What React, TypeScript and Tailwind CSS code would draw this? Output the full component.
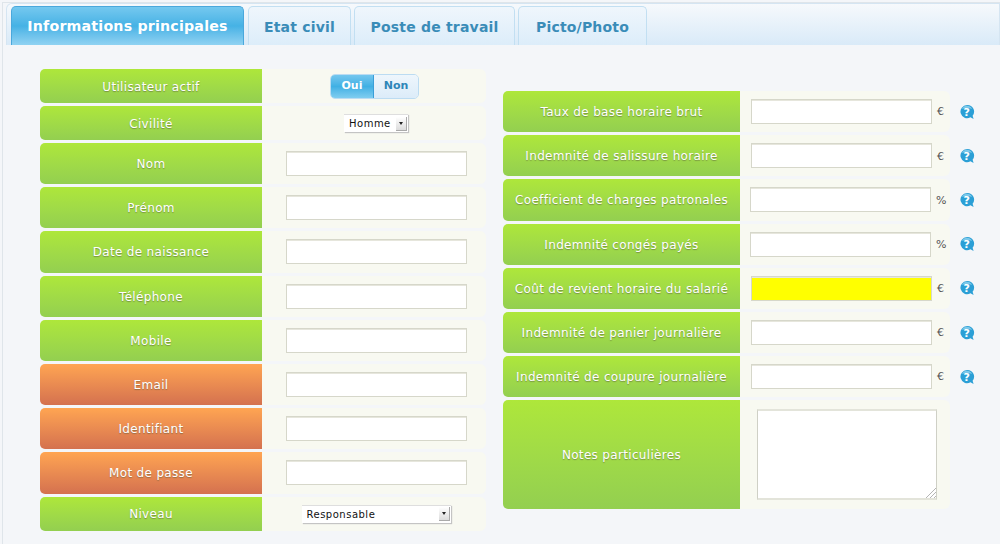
const font = "font-['DejaVu_Sans',sans-serif]";

type LeftRow = {
  label: string;
  kind: "toggle" | "select" | "input";
  orange?: boolean;
  short?: boolean;
  option?: string;
  selectWidth?: string;
};

const leftRows: LeftRow[] = [
  { label: "Utilisateur actif", kind: "toggle", short: true },
  { label: "Civilité", kind: "select", short: true, option: "Homme", selectWidth: "w-[64px]" },
  { label: "Nom", kind: "input" },
  { label: "Prénom", kind: "input" },
  { label: "Date de naissance", kind: "input" },
  { label: "Téléphone", kind: "input" },
  { label: "Mobile", kind: "input" },
  { label: "Email", kind: "input", orange: true },
  { label: "Identifiant", kind: "input", orange: true },
  { label: "Mot de passe", kind: "input", orange: true },
  { label: "Niveau", kind: "select", short: true, option: "Responsable", selectWidth: "w-[149px]" },
];

const rightRows = [
  { label: "Taux de base horaire brut", unit: "€" },
  { label: "Indemnité de salissure horaire", unit: "€" },
  { label: "Coefficient de charges patronales", unit: "%" },
  { label: "Indemnité congés payés", unit: "%" },
  { label: "Coût de revient horaire du salarié", unit: "€", yellow: true },
  { label: "Indemnité de panier journalière", unit: "€" },
  { label: "Indemnité de coupure journalière", unit: "€" },
];

function HelpIcon() {
  return (
    <svg width="16" height="16" viewBox="0 0 16 16" className="ml-[9px] shrink-0">
      <path d="M8 1a6.600 6.600 0 1 0 3.400 12.300l3.200 1.700-1-3.300A6.600 6.600 0 0 0 8 1z" fill="#2b9fd6" />
      <path d="M3 5a5.500 5.500 0 0 1 10 0c-3-1.500-7-1.500-10 0z" fill="#7cc8ea" />
      <text x="7.800" y="12" textAnchor="middle" fontSize="11" fontWeight="700" fill="#ffffff" fontFamily="DejaVu Sans">
        ?
      </text>
    </svg>
  );
}

function FakeSelect({ value, width }: { value: string; width: string }) {
  return (
    <div className={`flex h-[18px] items-center justify-between border-t border-[#dedede] bg-white pl-[5px] pr-[1px] shadow-[1px_1px_1px_#c4c4c4] ${width}`}>
      <span className="text-[10px] tracking-[0.5px] text-[#111]">{value}</span>
      <span className="flex h-[14px] w-[11px] items-center justify-center border-r border-b border-[#aaa] bg-gradient-to-b from-white to-[#dcdcdc]">
        <span className="border-x-[2.500px] border-t-[3px] border-x-transparent border-t-[#222]" />
      </span>
    </div>
  );
}

function Toggle() {
  return (
    <div className="-ml-[3px] flex h-[25px] w-[89px] overflow-hidden rounded-[5px] border border-[#bcdcf2] text-[11px] font-bold">
      <div className="flex w-[43px] items-center justify-center border-r border-[#3a9fd8] bg-gradient-to-b from-[#74c7ee] via-[#3fb0e4] to-[#7fcdf0] text-white">
        Oui
      </div>
      <div className="flex flex-1 items-center justify-center bg-gradient-to-b from-[#eef6fc] to-[#dcecf9] text-[#2f86b8]">
        Non
      </div>
    </div>
  );
}

function Label({ text, orange, className }: { text: string; orange?: boolean; className: string }) {
  const colors = orange
    ? "from-[#ffa552] to-[#d4714f]"
    : "from-[#aee73a] to-[#93cf50]";
  return (
    <div
      className={`flex items-center justify-center rounded-l-[5px] bg-gradient-to-b pt-[1px] text-[12px] tracking-[0.33px] text-white [text-shadow:0_1px_1px_rgba(90,90,60,0.55)] ${colors} ${className}`}
    >
      {text}
    </div>
  );
}

function TextBox({ className }: { className: string }) {
  return <div className={`h-[25px] border border-[#d6d7ca] shadow-[inset_0_1px_0_#e6e6dc] ${className}`} />;
}

const tabs = [
  { label: "Etat civil", width: "w-[103px]" },
  { label: "Poste de travail", width: "w-[161px]" },
  { label: "Picto/Photo", width: "w-[129px]" },
];

export default function App() {
  return (
    <div className={`h-[544px] w-[1000px] overflow-hidden bg-[#f4f6f9] pl-[2px] pt-[2px] ${font}`}>
      <div className="h-[542px] border-l border-t border-[#dfe5ea] pl-[3px]">
        <div className="flex h-[42px] items-end rounded-tl-[6px] border border-b-0 border-[#d5e5f2] bg-gradient-to-b from-[#f6f9fc] to-[#d9eaf8] pl-[4px]">
          <div className="mr-[4px] flex h-[39px] w-[233px] items-center justify-center rounded-t-[5px] border border-b-0 border-[#4aa8dc] bg-gradient-to-b from-[#74c8ef] via-[#45b2e5] to-[#8fd2f2] pt-[2px] text-[14.200px] font-bold tracking-[0.2px] text-white">
            Informations principales
          </div>
          <div className="flex gap-[3px]">
            {tabs.map((tab) => (
              <div
                key={tab.label}
                className={`flex h-[39px] items-center justify-center rounded-t-[5px] border border-b-0 border-[#c2dff2] bg-gradient-to-b from-[#eff6fc] to-[#dcedfa] pt-[2px] text-[14px] font-bold tracking-[0.2px] text-[#3a8cb8] ${tab.width}`}
              >
                {tab.label}
              </div>
            ))}
          </div>
        </div>

        <div className="flex pl-[34px]">
          <div className="mt-[24px] flex w-[446px] flex-col gap-[3px]">
            {leftRows.map((row) => {
              const height = row.short ? "h-[34px]" : "h-[41.200px]";
              return (
                <div key={row.label} className={`flex ${height}`}>
                  <Label text={row.label} orange={row.orange} className="w-[222px]" />
                  <div className="flex flex-1 items-center justify-center rounded-r-[6px] bg-[#f8f9f1] pl-[4px]">
                    {row.kind === "toggle" && <Toggle />}
                    {row.kind === "select" && <FakeSelect value={row.option ?? ""} width={row.selectWidth ?? ""} />}
                    {row.kind === "input" && <TextBox className="w-[181px] bg-white" />}
                  </div>
                </div>
              );
            })}
          </div>

          <div className="ml-[17px] mt-[46px] flex flex-col gap-[3px]">
            {rightRows.map((row) => (
              <div key={row.label} className="flex h-[41.200px] items-center">
                <Label text={row.label} className="h-full w-[237px]" />
                <div className="flex h-full w-[210px] items-center rounded-r-[6px] bg-[#f8f9f1] pl-[10px] text-[11px] text-[#555]">
                  <TextBox
                    className={`${row.unit === "%" ? "w-[181px]" : "ml-[1px] w-[181px]"} ${row.yellow ? "bg-[#ffff00]" : "bg-white"}`}
                  />
                  <span className="ml-[5px] pt-[2px]">{row.unit}</span>
                </div>
                <HelpIcon />
              </div>
            ))}
            <div className="flex h-[109px]">
              <Label text="Notes particulières" className="w-[237px]" />
              <div className="flex w-[210px] items-center rounded-r-[6px] bg-[#f8f9f1] pl-[17px]">
                <div className="relative h-[91px] w-[180px] border border-[#cfd0c6] border-t-2 border-b-2 border-t-[#e3e4da] border-b-[#e3e4da] bg-white">
                  <svg width="10" height="10" viewBox="0 0 10 10" className="absolute bottom-0 right-0">
                    <path d="M0 10 10 0M4 10 10 4M8 10 10 8" stroke="#b5b5b5" strokeWidth="1" />
                  </svg>
                </div>
              </div>
            </div>
          </div>
        </div>
      </div>
    </div>
  );
}
